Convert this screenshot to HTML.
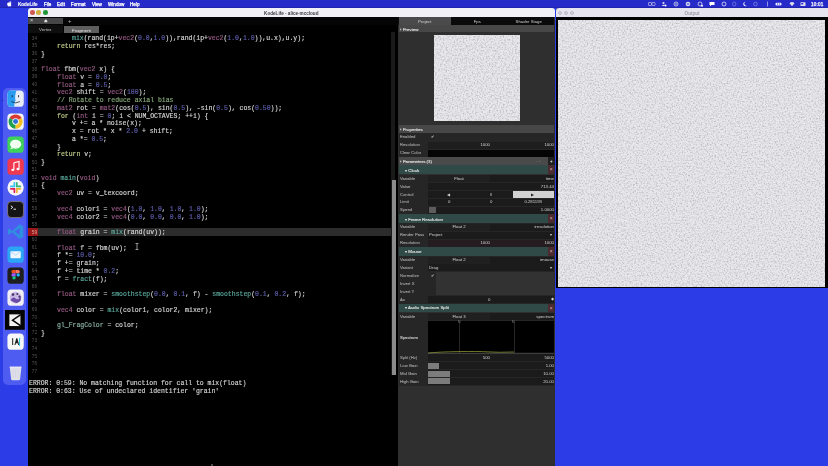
<!DOCTYPE html><html><head><meta charset="utf-8"><style>
*{margin:0;padding:0;box-sizing:border-box}
html,body{width:828px;height:466px;overflow:hidden;background:#2c3ce6;font-family:"Liberation Sans",sans-serif}
.a{will-change:transform}
.a{position:absolute}
.mb{color:#fff;-webkit-text-stroke:.25px;font-size:4.6px;line-height:8.4px;top:.7px !important;white-space:nowrap}
.code{font-family:"Liberation Mono",monospace;font-size:6.48px;-webkit-text-stroke:.16px;white-space:pre;color:#d6d6d6;line-height:7.76px;height:7.76px}
.ln{font-family:"Liberation Sans",sans-serif;font-size:4.7px;color:#6a6a6a;text-align:right;width:10px;line-height:7.76px;height:7.76px}
.t{color:#965a84}.c{color:#c4cc8c}.n{color:#5e5eac}.f{color:#5aa89c}.m{color:#86a878}.b{color:#8ab4a8}
.pl{font-size:4.2px;color:#a8a8a8;-webkit-text-stroke:.08px;white-space:nowrap}
.pv{font-size:4.3px;color:#d4d4d4;white-space:nowrap}
</style></head><body>
<div class="a" style="left:0px;top:0px;width:828px;height:7.6px;background:#262ac8;"></div>
<div class="a" style="left:0px;top:7.2px;width:828px;height:0.8px;background:#2224b0;"></div>
<svg class="a" style="left:7px;top:1.2px" width="5" height="5.5" viewBox="0 0 10 12"><path d="M8.2 6.4c0-1.5 1.2-2.2 1.3-2.3-.7-1-1.8-1.2-2.2-1.2-.9-.1-1.8.6-2.3.6-.5 0-1.2-.5-2-.5C1.9 3 .9 3.6.4 4.6c-1 1.8-.3 4.4.7 5.8.5.7 1 1.5 1.8 1.5.7 0 1-.5 1.9-.5.9 0 1.1.5 1.9.5.8 0 1.3-.7 1.7-1.4.5-.8.8-1.6.8-1.6s-1-.4-1-2.5zM6.7 2C7.1 1.5 7.4.8 7.3.1 6.7.1 6 .5 5.6 1c-.4.4-.7 1.1-.6 1.8.7 0 1.3-.4 1.7-.8z" fill="#fff"/></svg>
<div class="a mb" style="left:18px;top:0px;font-weight:bold;-webkit-text-stroke:.1px">KodeLife</div>
<div class="a mb" style="left:43.5px;top:0px;">File</div>
<div class="a mb" style="left:57px;top:0px;">Edit</div>
<div class="a mb" style="left:71px;top:0px;">Format</div>
<div class="a mb" style="left:91.5px;top:0px;">View</div>
<div class="a mb" style="left:108px;top:0px;">Window</div>
<div class="a mb" style="left:130px;top:0px;">Help</div>
<div class="a mb" style="left:810.8px;top:0px;font-size:4.6px;letter-spacing:.2px">10:01</div>
<svg class="a" style="left:648px;top:1px" width="7.5" height="6" viewBox="0 0 15.0 12"><rect x="1" y="3" width="6" height="6" rx="1" stroke="#dde" stroke-width="1.2" fill="none"/><rect x="8" y="3" width="6" height="6" rx="1" stroke="#dde" stroke-width="1.2" fill="none"/></svg>
<svg class="a" style="left:661px;top:1px" width="6" height="6" viewBox="0 0 12 12"><circle cx="5" cy="4" r="2.2" fill="#dde"/><path d="M1.5 10q3.5-5 7 0z" fill="#dde"/><circle cx="9" cy="9" r="2" fill="#fff"/></svg>
<svg class="a" style="left:672.5px;top:1px" width="6" height="6" viewBox="0 0 12 12"><circle cx="6" cy="6" r="4" stroke="#dde" stroke-width="1.6" fill="none"/><circle cx="6" cy="6" r="1.5" fill="#dde"/></svg>
<svg class="a" style="left:684.5px;top:1px" width="6" height="6" viewBox="0 0 12 12"><circle cx="6" cy="6" r="4.6" fill="#dde"/><rect x="3.5" y="5" width="5" height="2" fill="#2a2fd2"/></svg>
<svg class="a" style="left:696.5px;top:1px" width="6.5" height="6" viewBox="0 0 13.0 12"><circle cx="6" cy="6" r="4" stroke="#dde" stroke-width="1.6" fill="none"/><circle cx="10" cy="9.5" r="2" fill="#fff"/></svg>
<svg class="a" style="left:709px;top:1px" width="6" height="6" viewBox="0 0 12 12"><path d="M1 2h10v6H5l-3 2.5V8H1z" fill="#fff"/></svg>
<svg class="a" style="left:721px;top:1px" width="6" height="6" viewBox="0 0 12 12"><circle cx="6" cy="6" r="4" stroke="#fff" stroke-width="1.4" fill="none"/></svg>
<svg class="a" style="left:732px;top:1px" width="4.5" height="6" viewBox="0 0 9.0 12"><rect x="1.5" y="2.5" width="6" height="7" rx="1" stroke="#8890e8" stroke-width="1.2" fill="none"/></svg>
<svg class="a" style="left:741.5px;top:1px" width="5.5" height="6" viewBox="0 0 11.0 12"><path d="M7 1.5a4.5 4.5 0 1 0 3.5 7.5 3.8 3.8 0 0 1-3.5-7.5z" fill="#fff"/></svg>
<svg class="a" style="left:753px;top:1px" width="5" height="6" viewBox="0 0 10 12"><circle cx="5" cy="6" r="3.6" stroke="#9aa0ee" stroke-width="1.2" fill="none"/></svg>
<svg class="a" style="left:765.5px;top:1px" width="3" height="6" viewBox="0 0 6 12"><path d="M3 1v10" stroke="#c8cdf8" stroke-width="1.3"/></svg>
<svg class="a" style="left:775px;top:1px" width="7.5" height="6" viewBox="0 0 15.0 12"><rect x="1" y="3.5" width="12" height="5.5" rx="2" fill="#eef"/><rect x="4" y="3.5" width="1" height="5.5" fill="#2a2fd2"/><rect x="8" y="3.5" width="1" height="5.5" fill="#2a2fd2"/></svg>
<svg class="a" style="left:788.5px;top:1px" width="6" height="6" viewBox="0 0 12 12"><path d="M1 4.5a7 7 0 0 1 10 0L6 10.5z" fill="#dde"/></svg>
<svg class="a" style="left:799.5px;top:1px" width="6" height="6" viewBox="0 0 12 12"><rect x="1" y="2.5" width="10" height="7.5" rx="1" fill="#dde"/><rect x="2.5" y="4" width="4" height="3" fill="#2a2fd2"/></svg>
<div class="a" style="left:2.6px;top:88px;width:23.2px;height:296.5px;background:rgba(120,130,255,.45);border-radius:5px;"></div>
<svg class="a" style="left:6.8px;top:90.3px" width="17.2" height="17.2" viewBox="0 0 20 20"><rect x="0.5" y="0.5" width="19" height="19" rx="4.5" fill="#e9eef6"/><path d="M4.5 .5H11C9.5 5 9 9 10 12.5 9 13 8.5 15 8.5 19.5H4.5A4 4 0 0 1 .5 15.5V4.5A4 4 0 0 1 4.5 .5z" fill="#2a9cf0"/><rect x="5.5" y="6" width="1" height="2.5" fill="#123"/><rect x="13" y="6" width="1" height="2.5" fill="#123"/><path d="M5 13.5q5 3 10 0" stroke="#123" stroke-width=".9" fill="none"/></svg>
<svg class="a" style="left:6.8px;top:113.3px" width="17.2" height="17.2" viewBox="0 0 20 20"><rect x="0.5" y="0.5" width="19" height="19" rx="4.5" fill="#f6f6f6"/><path d="M10 10L2.90 5.90A8.2 8.2 0 0 1 17.10 5.90z" fill="#d93b30"/><path d="M10 10L10.00 18.20A8.2 8.2 0 0 1 2.90 5.90z" fill="#1e9e50"/><path d="M10 10L17.10 5.90A8.2 8.2 0 0 1 10.00 18.20z" fill="#f6c026"/><circle cx="10" cy="10" r="3.8" fill="#fff"/><circle cx="10" cy="10" r="2.9" fill="#2f72d8"/></svg>
<svg class="a" style="left:6.8px;top:135.8px" width="17.2" height="17.2" viewBox="0 0 20 20"><rect x="0.5" y="0.5" width="19" height="19" rx="4.5" fill="#3fd25a"/><ellipse cx="10" cy="9.5" rx="6.5" ry="5.2" fill="#f2fff2"/><path d="M5 13l-1.2 2.8 3.5-1.6z" fill="#f2fff2"/></svg>
<svg class="a" style="left:6.8px;top:157.6px" width="17.2" height="17.2" viewBox="0 0 20 20"><rect x="0.5" y="0.5" width="19" height="19" rx="4.5" fill="#f0384f"/><path d="M8 5.5l6-1.5v8.5" stroke="#fff" stroke-width="1.3" fill="none"/><path d="M8 5.5V13.5" stroke="#fff" stroke-width="1.3"/><ellipse cx="6.8" cy="13.8" rx="1.8" ry="1.4" fill="#fff"/><ellipse cx="12.8" cy="12.8" rx="1.8" ry="1.4" fill="#fff"/></svg>
<svg class="a" style="left:6.8px;top:179.2px" width="17.2" height="17.2" viewBox="0 0 20 20"><rect x="0.5" y="0.5" width="19" height="19" rx="9.5" fill="#f6f4f6"/><rect x="7.6" y="3.5" width="2" height="6" rx="1" fill="#36c5f0"/><rect x="3.5" y="7.6" width="6" height="2" rx="1" fill="#36c5f0"/><rect x="10.4" y="3.5" width="2" height="6" rx="1" fill="#2eb67d"/><rect x="10.4" y="7.6" width="6" height="2" rx="1" fill="#2eb67d"/><rect x="10.4" y="10.4" width="2" height="6" rx="1" fill="#ecb22e"/><rect x="10.4" y="10.4" width="6" height="2" rx="1" fill="#ecb22e"/><rect x="7.6" y="10.4" width="2" height="6" rx="1" fill="#e01e5a"/><rect x="3.5" y="10.4" width="6" height="2" rx="1" fill="#e01e5a"/></svg>
<svg class="a" style="left:6.8px;top:201.2px" width="17.2" height="17.2" viewBox="0 0 20 20"><rect x="0.7" y="0.7" width="18.6" height="18.6" rx="4.2" fill="#141414" stroke="#8a7a7a" stroke-width="1"/><path d="M4.5 5.5l2.2 1.8-2.2 1.8" stroke="#fff" stroke-width="1.1" fill="none"/><rect x="7.5" y="9" width="3" height="1" fill="#fff"/></svg>
<svg class="a" style="left:6.8px;top:223.4px" width="17.2" height="17.2" viewBox="0 0 20 20"><path d="M14.5 1.5L19 3.8V16.2L14.5 18.5 6 10.8 2.6 13.5 1 12.6V7.4L2.6 6.5 6 9.2z M14.5 6L9.2 10 14.5 14z" fill="#2f8ee0" fill-rule="evenodd"/></svg>
<svg class="a" style="left:6.8px;top:245.6px" width="17.2" height="17.2" viewBox="0 0 20 20"><rect x="0.5" y="0.5" width="19" height="19" rx="4.5" fill="#2aa6f4"/><rect x="4" y="6.2" width="12" height="8" rx="1" fill="#eef6ff"/><path d="M4.2 6.6l5.8 4 5.8-4" stroke="#9cc8ee" stroke-width=".7" fill="none"/></svg>
<svg class="a" style="left:6.8px;top:267.4px" width="17.2" height="17.2" viewBox="0 0 20 20"><rect x="0.5" y="0.5" width="19" height="19" rx="4.5" fill="#1e1e1e"/><path d="M7 3.5h3v3.8H7a1.9 1.9 0 0 1 0-3.8z" fill="#f24e1e"/><path d="M10 3.5h3a1.9 1.9 0 0 1 0 3.8h-3z" fill="#ff7262"/><path d="M7 7.3h3v3.8H7a1.9 1.9 0 0 1 0-3.8z" fill="#a259ff"/><circle cx="13" cy="9.2" r="1.9" fill="#1abcfe"/><path d="M7 11.1h3v1.9a1.9 1.9 0 1 1-3-1.9z" fill="#0acf83"/></svg>
<svg class="a" style="left:6.8px;top:289.4px" width="17.2" height="17.2" viewBox="0 0 20 20"><rect x="0.5" y="0.5" width="19" height="19" rx="4.5" fill="#f1eef4"/><circle cx="10" cy="10" r="6.8" fill="#c9b8e6"/><path d="M4 13q3-5 6-2t6-3v5q-3 4-6 3t-6-3z" fill="#6b4aa8"/><circle cx="7" cy="6.5" r="1.6" fill="#4a3a6a"/><circle cx="12" cy="5.8" r="1.2" fill="#4a3a6a"/><circle cx="14.5" cy="9" r="1.3" fill="#4a3a6a"/></svg>
<svg class="a" style="left:5.2px;top:309.6px" width="19.8" height="19.8" viewBox="0 0 20 20"><rect width="20" height="20" fill="#050505"/><rect x="4.4" y="4.4" width="11.2" height="11.8" fill="#f2f2f2"/><path d="M16 4.6 L7.6 10.3 L16 16" stroke="#050505" stroke-width="1.5" fill="none"/></svg>
<svg class="a" style="left:6.8px;top:333.4px" width="17.2" height="17.2" viewBox="0 0 20 20"><rect x="0.5" y="0.5" width="19" height="19" rx="4.5" fill="#f8f8f8"/><path d="M6 6.2h1.2V14H6z M8.6 14l2.2-7.8h1.2L14.2 14h-1.2l-.6-2.2H10.4L9.8 14z" fill="#222"/><rect x="14" y="5.5" width="1.2" height="9.5" fill="#29c6de"/></svg>
<svg class="a" style="left:6.8px;top:364.4px" width="17.2" height="17.2" viewBox="0 0 20 20"><path d="M3.2 3.5h13.6l-1.6 14.2a1.5 1.5 0 0 1-1.5 1.3H6.3a1.5 1.5 0 0 1-1.5-1.3z" fill="#dfe0ea"/><path d="M3.2 3.5h13.6" stroke="#f4f4fa" stroke-width="1"/><path d="M7 6v10 M10 6v10 M13 6v10" stroke="#c8c9d6" stroke-width=".5"/></svg>
<div class="a" style="left:2.4px;top:99.8px;width:1.4px;height:1.4px;border-radius:1px;background:#1a1a3a"></div>
<div class="a" style="left:28px;top:16.6px;width:527.2px;height:449.4px;background:#000;"></div>
<div class="a" style="left:28px;top:8.2px;width:526.6px;height:8.8px;background:#f1f0f6;border-radius:3px 3px 0 0;"></div>
<div class="a" style="left:28px;top:16.6px;width:526.6px;height:0.5px;background:#c8c8d0;"></div>
<div class="a" style="left:29.900000000000002px;top:10.3px;width:4.6px;height:4.6px;border-radius:50%;background:#cf5752"></div>
<div class="a" style="left:36.400000000000006px;top:10.3px;width:4.6px;height:4.6px;border-radius:50%;background:#cfae3e"></div>
<div class="a" style="left:42.5px;top:10.3px;width:4.6px;height:4.6px;border-radius:50%;background:#22963a"></div>
<div class="a " style="left:28px;top:9.6px;width:526.6px;text-align:center;font-size:4.6px;line-height:8.8px;color:#3a3a44;font-weight:bold">KodeLife - alice-mccloud</div>
<div class="a" style="left:28px;top:17.1px;width:370.5px;height:8px;background:#050505;"></div>
<div class="a" style="left:28px;top:18.2px;width:34.7px;height:6.3px;background:#464646;"></div>
<div class="a " style="left:30.3px;top:17.3px;font-size:5.5px;line-height:7px;color:#ddd">×</div>
<svg class="a" style="left:43.6px;top:19.2px" width="3.6" height="3.6" viewBox="0 0 6 6"><path d="M0.5 3L3 .6 5.5 3V5.5h-5z" fill="#ddd"/></svg>
<div class="a " style="left:68.3px;top:18.4px;font-size:6px;line-height:7px;color:#bbb">+</div>
<div class="a" style="left:28px;top:25.2px;width:34.7px;height:8px;background:#0e0e0e;"></div>
<div class="a " style="left:28px;top:26.2px;width:34.7px;text-align:center;font-size:4.4px;line-height:8px;color:#c4c4c4">Vertex</div>
<div class="a" style="left:63.7px;top:26px;width:34.8px;height:7.3px;background:#5e5e5e;"></div>
<div class="a " style="left:63.7px;top:26.7px;width:34.8px;text-align:center;font-size:4.4px;line-height:7.3px;color:#e6e6e6">Fragment</div>
<div class="a" style="left:28px;top:227.92000000000002px;width:363px;height:7.76px;background:#2c2c2c;"></div>
<div class="a" style="left:28px;top:227.92000000000002px;width:10px;height:7.76px;background:#9a1818;"></div>
<div class="a ln" style="left:26.8px;top:34.52px;color:#555555">34</div>
<div class="a code" style="left:72.10px;top:35.02px"><span class="f">mix</span>(rand(ip+<span class="t">vec2</span>(<span class="n">0.0</span>,<span class="n">1.0</span>)),rand(ip+<span class="t">vec2</span>(<span class="n">1.0</span>,<span class="n">1.0</span>)),u.x),u.y);</div>
<div class="a ln" style="left:26.8px;top:42.28px;color:#555555">35</div>
<div class="a code" style="left:56.55px;top:42.78px"><span class="c">return</span> res*res;</div>
<div class="a ln" style="left:26.8px;top:50.04px;color:#555555">36</div>
<div class="a code" style="left:41.00px;top:50.54px">}</div>
<div class="a ln" style="left:26.8px;top:57.80px;color:#555555">37</div>
<div class="a ln" style="left:26.8px;top:65.56px;color:#555555">38</div>
<div class="a code" style="left:41.00px;top:66.06px"><span class="t">float</span> fbm(<span class="t">vec2</span> x) {</div>
<div class="a ln" style="left:26.8px;top:73.32px;color:#555555">39</div>
<div class="a code" style="left:56.55px;top:73.82px"><span class="t">float</span> v = <span class="n">0.0</span>;</div>
<div class="a ln" style="left:26.8px;top:81.08px;color:#555555">40</div>
<div class="a code" style="left:56.55px;top:81.58px"><span class="t">float</span> a = <span class="n">0.5</span>;</div>
<div class="a ln" style="left:26.8px;top:88.84px;color:#555555">41</div>
<div class="a code" style="left:56.55px;top:89.34px"><span class="t">vec2</span> shift = <span class="t">vec2</span>(<span class="n">100</span>);</div>
<div class="a ln" style="left:26.8px;top:96.60px;color:#555555">42</div>
<div class="a code" style="left:56.55px;top:97.10px"><span class="m">// Rotate to reduce axial bias</span></div>
<div class="a ln" style="left:26.8px;top:104.36px;color:#555555">43</div>
<div class="a code" style="left:56.55px;top:104.86px"><span class="t">mat2</span> rot = <span class="t">mat2</span>(cos(<span class="n">0.5</span>), sin(<span class="n">0.5</span>), -sin(<span class="n">0.5</span>), cos(<span class="n">0.50</span>));</div>
<div class="a ln" style="left:26.8px;top:112.12px;color:#555555">44</div>
<div class="a code" style="left:56.55px;top:112.62px"><span class="c">for</span> (<span class="t">int</span> i = <span class="n">0</span>; i &lt; NUM_OCTAVES; ++i) {</div>
<div class="a ln" style="left:26.8px;top:119.88px;color:#555555">45</div>
<div class="a code" style="left:72.10px;top:120.38px">v += a * noise(x);</div>
<div class="a ln" style="left:26.8px;top:127.64px;color:#555555">46</div>
<div class="a code" style="left:72.10px;top:128.14px">x = rot * x * <span class="n">2.0</span> + shift;</div>
<div class="a ln" style="left:26.8px;top:135.40px;color:#555555">47</div>
<div class="a code" style="left:72.10px;top:135.90px">a *= <span class="n">0.5</span>;</div>
<div class="a ln" style="left:26.8px;top:143.16px;color:#555555">48</div>
<div class="a code" style="left:56.55px;top:143.66px">}</div>
<div class="a ln" style="left:26.8px;top:150.92px;color:#555555">49</div>
<div class="a code" style="left:56.55px;top:151.42px"><span class="c">return</span> v;</div>
<div class="a ln" style="left:26.8px;top:158.68px;color:#555555">50</div>
<div class="a code" style="left:41.00px;top:159.18px">}</div>
<div class="a ln" style="left:26.8px;top:166.44px;color:#555555">51</div>
<div class="a ln" style="left:26.8px;top:174.20px;color:#555555">52</div>
<div class="a code" style="left:41.00px;top:174.70px"><span class="t">void</span> <span class="f">main</span>(<span class="t">void</span>)</div>
<div class="a ln" style="left:26.8px;top:181.96px;color:#555555">53</div>
<div class="a code" style="left:41.00px;top:182.46px">{</div>
<div class="a ln" style="left:26.8px;top:189.72px;color:#555555">54</div>
<div class="a code" style="left:56.55px;top:190.22px"><span class="t">vec2</span> uv = v_texcoord;</div>
<div class="a ln" style="left:26.8px;top:197.48px;color:#555555">55</div>
<div class="a ln" style="left:26.8px;top:205.24px;color:#555555">56</div>
<div class="a code" style="left:56.55px;top:205.74px"><span class="t">vec4</span> color1 = <span class="t">vec4</span>(<span class="n">1.0</span>, <span class="n">1.0</span>, <span class="n">1.0</span>, <span class="n">1.0</span>);</div>
<div class="a ln" style="left:26.8px;top:213.00px;color:#555555">57</div>
<div class="a code" style="left:56.55px;top:213.50px"><span class="t">vec4</span> color2 = <span class="t">vec4</span>(<span class="n">0.0</span>, <span class="n">0.0</span>, <span class="n">0.0</span>, <span class="n">1.0</span>);</div>
<div class="a ln" style="left:26.8px;top:220.76px;color:#555555">58</div>
<div class="a ln" style="left:26.8px;top:228.52px;color:#e0a0a0">59</div>
<div class="a code" style="left:56.55px;top:229.02px"><span class="t">float</span> grain = <span class="f">mix</span>(rand(uv));</div>
<div class="a ln" style="left:26.8px;top:236.28px;color:#555555">60</div>
<div class="a ln" style="left:26.8px;top:244.04px;color:#555555">61</div>
<div class="a code" style="left:56.55px;top:244.54px"><span class="t">float</span> f = fbm(uv);</div>
<div class="a ln" style="left:26.8px;top:251.80px;color:#555555">62</div>
<div class="a code" style="left:56.55px;top:252.30px">f *= <span class="n">10.0</span>;</div>
<div class="a ln" style="left:26.8px;top:259.56px;color:#555555">63</div>
<div class="a code" style="left:56.55px;top:260.06px">f += grain;</div>
<div class="a ln" style="left:26.8px;top:267.32px;color:#555555">64</div>
<div class="a code" style="left:56.55px;top:267.82px">f += time * <span class="n">0.2</span>;</div>
<div class="a ln" style="left:26.8px;top:275.08px;color:#555555">65</div>
<div class="a code" style="left:56.55px;top:275.58px">f = <span class="f">fract</span>(f);</div>
<div class="a ln" style="left:26.8px;top:282.84px;color:#555555">66</div>
<div class="a ln" style="left:26.8px;top:290.60px;color:#555555">67</div>
<div class="a code" style="left:56.55px;top:291.10px"><span class="t">float</span> mixer = <span class="f">smoothstep</span>(<span class="n">0.0</span>, <span class="n">0.1</span>, f) - <span class="f">smoothstep</span>(<span class="n">0.1</span>, <span class="n">0.2</span>, f);</div>
<div class="a ln" style="left:26.8px;top:298.36px;color:#555555">68</div>
<div class="a ln" style="left:26.8px;top:306.12px;color:#555555">69</div>
<div class="a code" style="left:56.55px;top:306.62px"><span class="t">vec4</span> color = <span class="f">mix</span>(color1, color2, mixer);</div>
<div class="a ln" style="left:26.8px;top:313.88px;color:#555555">70</div>
<div class="a ln" style="left:26.8px;top:321.64px;color:#555555">71</div>
<div class="a code" style="left:56.55px;top:322.14px"><span class="b">gl_FragColor</span> = color;</div>
<div class="a ln" style="left:26.8px;top:329.40px;color:#555555">72</div>
<div class="a code" style="left:41.00px;top:329.90px">}</div>
<div class="a ln" style="left:26.8px;top:337.16px;color:#555555">73</div>
<div class="a ln" style="left:26.8px;top:344.92px;color:#555555">74</div>
<div class="a ln" style="left:26.8px;top:352.68px;color:#555555">75</div>
<div class="a ln" style="left:26.8px;top:360.44px;color:#555555">76</div>
<div class="a ln" style="left:26.8px;top:368.20px;color:#555555">77</div>
<svg class="a" style="left:134.5px;top:243px" width="4" height="7" viewBox="0 0 4 7"><path d="M0.5 .5h3M2 .5v6M.5 6.5h3" stroke="#ccc" stroke-width=".7" fill="none"/></svg>
<div class="a code" style="left:29.2px;top:380.10px;color:#d2d2d2">ERROR: 0:59: No matching function for call to mix(float)</div>
<div class="a code" style="left:29.2px;top:388.00px;color:#d2d2d2">ERROR: 0:63: Use of undeclared identifier &#x27;grain&#x27;</div>
<div class="a" style="left:210.8px;top:463.6px;width:1.6px;height:2px;background:#666;border-radius:1px"></div>
<div class="a" style="left:391.4px;top:32px;width:4.3px;height:343px;background:#1a1a1a;"></div>
<div class="a" style="left:391.8px;top:180.2px;width:3.6px;height:194.8px;background:#8c8c8c;"></div>
<div class="a" style="left:398.2px;top:17.1px;width:157.00000000000006px;height:448.9px;background:#2f2f2f;"></div>
<div class="a" style="left:398.2px;top:17.1px;width:156.40000000000003px;height:8px;background:#0a0a0a;"></div>
<div class="a" style="left:399.0px;top:17.1px;width:51.5px;height:8px;background:#4b4b4b;"></div>
<div class="a pv" style="left:399.0px;top:17.6px;width:51.5px;text-align:center;line-height:8px">Project</div>
<div class="a pv" style="left:450.5px;top:17.6px;width:52.5px;text-align:center;line-height:8px;color:#cfcfcf">Fps</div>
<div class="a pv" style="left:503px;top:17.6px;width:51.5px;text-align:center;line-height:8px;color:#cfcfcf">Shader Stage</div>
<div class="a" style="left:398.8px;top:25.1px;width:155.20000000000005px;height:7.3999999999999995px;background:#474747;"></div>
<div class="a pv" style="left:400.3px;top:25.6px;line-height:7.8px;font-size:4.4px;color:#e2e2e2;-webkit-text-stroke:.12px">› Preview</div>
<svg class="a" style="left:434px;top:34.6px" width="86" height="86"><filter id="nz"><feTurbulence type="fractalNoise" baseFrequency="0.65" numOctaves="2" seed="3"/><feColorMatrix values="0 0 0 0 0.5  0 0 0 0 0.5  0 0 0 0 0.54  2.5 0 0 0 -1.08"/></filter><rect width="86" height="86" fill="#e8e8ec"/><rect width="86" height="86" filter="url(#nz)"/></svg>
<div class="a" style="left:398.8px;top:125px;width:155.20000000000005px;height:7.6px;background:#474747;"></div>
<div class="a pv" style="left:400.3px;top:125.5px;line-height:8px;font-size:4.4px;color:#e2e2e2;-webkit-text-stroke:.12px">› Properties</div>
<div class="a" style="left:398.8px;top:133px;width:155.20000000000005px;height:7.9px;background:#262626;"></div>
<div class="a pl" style="left:400.3px;top:133px;line-height:7.9px">Enabled</div>
<div class="a pv" style="left:430.8px;top:133px;line-height:7.9px;font-size:4px">✔</div>
<div class="a" style="left:398.8px;top:141px;width:155.20000000000005px;height:7.9px;background:#262626;"></div>
<div class="a pl" style="left:400.3px;top:141px;line-height:7.9px">Resolution</div>
<div class="a" style="left:428px;top:141.6px;width:126px;height:6.8px;background:#1e1e1e;"></div>
<div class="a pv" style="left:470px;top:141px;width:20px;text-align:right;line-height:7.9px">1000</div>
<div class="a pv" style="left:534px;top:141px;width:20px;text-align:right;line-height:7.9px">1000</div>
<div class="a" style="left:398.8px;top:149px;width:155.20000000000005px;height:7.9px;background:#262626;"></div>
<div class="a pl" style="left:400.3px;top:149px;line-height:7.9px">Clear Color</div>
<div class="a" style="left:428px;top:149.6px;width:126px;height:6.8px;background:#050505;"></div>
<div class="a" style="left:398.8px;top:157px;width:155.20000000000005px;height:7.6px;background:#4a4a4a;"></div>
<div class="a pv" style="left:400.3px;top:157.5px;line-height:8px;font-size:4.4px;color:#e2e2e2;-webkit-text-stroke:.12px">› Parameters (3)</div>
<div class="a" style="left:548px;top:157.4px;width:6.6px;height:7.6px;background:#202020;"></div>
<div class="a " style="left:548px;top:157px;width:6.6px;text-align:center;line-height:8px;font-size:5px;color:#eee">+</div>
<div class="a " style="left:536px;top:157px;line-height:8px;font-size:4px;color:#777">- +</div>
<div class="a" style="left:398.8px;top:165px;width:155.20000000000005px;height:9.299999999999999px;background:#2f4a47;"></div>
<div class="a pv" style="left:405.3px;top:165.5px;line-height:9.7px;font-size:4.4px;color:#e2e2e2;-webkit-text-stroke:.12px">▾ Clock</div>
<div class="a" style="left:548px;top:165px;width:6.4px;height:9.299999999999999px;background:#4a2c30;"></div>
<div class="a " style="left:548px;top:165px;width:6.4px;text-align:center;line-height:9.7px;font-size:5px;color:#e8b0b0">×</div>
<div class="a" style="left:398.8px;top:174.7px;width:155.20000000000005px;height:7.9px;background:#262626;"></div>
<div class="a pl" style="left:400.3px;top:174.7px;line-height:7.9px">Variable</div>
<div class="a" style="left:428px;top:175.2px;width:126px;height:6.9px;background:#1b1b1b;"></div>
<div class="a" style="left:428px;top:175.2px;width:62px;height:6.9px;background:#202020;"></div>
<div class="a pv" style="left:428px;top:174.7px;width:62px;text-align:center;line-height:7.9px">Float</div>
<div class="a pv" style="left:520px;top:174.7px;width:34px;text-align:right;line-height:7.9px">time</div>
<div class="a" style="left:398.8px;top:182.6px;width:155.20000000000005px;height:7.9px;background:#262626;"></div>
<div class="a pl" style="left:400.3px;top:182.6px;line-height:7.9px">Value</div>
<div class="a" style="left:428px;top:183.1px;width:126px;height:6.9px;background:#1b1b1b;"></div>
<div class="a pv" style="left:520px;top:182.6px;width:34px;text-align:right;line-height:7.9px">713.44</div>
<div class="a" style="left:398.8px;top:190.5px;width:155.20000000000005px;height:7.9px;background:#262626;"></div>
<div class="a pl" style="left:400.3px;top:190.5px;line-height:7.9px">Control</div>
<div class="a" style="left:428px;top:191.0px;width:126px;height:6.9px;background:#1b1b1b;"></div>
<div class="a pv" style="left:447px;top:190.5px;line-height:7.9px;font-size:4px">◀</div>
<div class="a pv" style="left:489.8px;top:190.5px;line-height:7.9px;font-size:4.4px">‖</div>
<div class="a" style="left:513.4px;top:191.2px;width:41.2px;height:6.6px;background:#d2d2d2;"></div>
<div class="a " style="left:531px;top:190.5px;line-height:7.9px;font-size:4px;color:#222">▶</div>
<div class="a" style="left:398.8px;top:198.4px;width:155.20000000000005px;height:7.9px;background:#262626;"></div>
<div class="a pl" style="left:400.3px;top:198.4px;line-height:7.9px">Limit</div>
<div class="a" style="left:428px;top:198.9px;width:126px;height:6.9px;background:#1b1b1b;"></div>
<div class="a pv" style="left:447.8px;top:198.4px;line-height:7.9px">0</div>
<div class="a pv" style="left:490px;top:198.4px;line-height:7.9px">0</div>
<div class="a pv" style="left:520px;top:198.4px;width:22px;text-align:right;line-height:7.9px">0.281193</div>
<div class="a" style="left:398.8px;top:206.3px;width:155.20000000000005px;height:7.9px;background:#262626;"></div>
<div class="a pl" style="left:400.3px;top:206.3px;line-height:7.9px">Speed</div>
<div class="a" style="left:428px;top:206.8px;width:126px;height:6.9px;background:#1b1b1b;"></div>
<div class="a" style="left:428.9px;top:207.3px;width:7px;height:6.4px;background:#5c5c5c;"></div>
<div class="a pv" style="left:520px;top:206.3px;width:34px;text-align:right;line-height:7.9px">1.0000</div>
<div class="a" style="left:398.8px;top:214.2px;width:155.20000000000005px;height:8.799999999999999px;background:#2f4a47;"></div>
<div class="a pv" style="left:405.3px;top:214.7px;line-height:9.2px;font-size:4.4px;color:#e2e2e2;-webkit-text-stroke:.12px">▾ Frame Resolution</div>
<div class="a" style="left:548px;top:214.2px;width:6.4px;height:8.799999999999999px;background:#4a2c30;"></div>
<div class="a " style="left:548px;top:214.2px;width:6.4px;text-align:center;line-height:9.2px;font-size:5px;color:#e8b0b0">×</div>
<div class="a" style="left:398.8px;top:223.4px;width:155.20000000000005px;height:7.9px;background:#262626;"></div>
<div class="a pl" style="left:400.3px;top:223.4px;line-height:7.9px">Variable</div>
<div class="a" style="left:428px;top:223.9px;width:126px;height:6.9px;background:#1b1b1b;"></div>
<div class="a" style="left:428px;top:223.9px;width:62px;height:6.9px;background:#202020;"></div>
<div class="a pv" style="left:428px;top:223.4px;width:62px;text-align:center;line-height:7.9px">Float 2</div>
<div class="a pv" style="left:514px;top:223.4px;width:40px;text-align:right;line-height:7.9px">iresolution</div>
<div class="a" style="left:398.8px;top:231.3px;width:155.20000000000005px;height:7.9px;background:#262626;"></div>
<div class="a pl" style="left:400.3px;top:231.3px;line-height:7.9px">Render Pass</div>
<div class="a" style="left:428px;top:231.8px;width:126px;height:6.9px;background:#1b1b1b;"></div>
<div class="a pv" style="left:429px;top:231.3px;line-height:7.9px">Project</div>
<div class="a pv" style="left:550px;top:231.3px;line-height:7.9px;font-size:4px">▾</div>
<div class="a" style="left:398.8px;top:239.2px;width:155.20000000000005px;height:7.9px;background:#262626;"></div>
<div class="a pl" style="left:400.3px;top:239.2px;line-height:7.9px">Resolution</div>
<div class="a" style="left:428px;top:239.7px;width:126px;height:6.9px;background:#1b1b1b;"></div>
<div class="a" style="left:428px;top:239.7px;width:126px;height:6.9px;background:#241c1f;"></div>
<div class="a pv" style="left:470px;top:239.2px;width:20px;text-align:right;line-height:7.9px">1000</div>
<div class="a pv" style="left:534px;top:239.2px;width:20px;text-align:right;line-height:7.9px">1000</div>
<div class="a" style="left:398.8px;top:247.1px;width:155.20000000000005px;height:8.5px;background:#2f4a47;"></div>
<div class="a pv" style="left:405.3px;top:247.6px;line-height:8.9px;font-size:4.4px;color:#e2e2e2;-webkit-text-stroke:.12px">▾ Mouse</div>
<div class="a" style="left:548px;top:247.1px;width:6.4px;height:8.5px;background:#4a2c30;"></div>
<div class="a " style="left:548px;top:247.1px;width:6.4px;text-align:center;line-height:8.9px;font-size:5px;color:#e8b0b0">×</div>
<div class="a" style="left:398.8px;top:256px;width:155.20000000000005px;height:7.9px;background:#262626;"></div>
<div class="a pl" style="left:400.3px;top:256px;line-height:7.9px">Variable</div>
<div class="a" style="left:428px;top:256.5px;width:126px;height:6.9px;background:#1b1b1b;"></div>
<div class="a" style="left:428px;top:256.5px;width:62px;height:6.9px;background:#202020;"></div>
<div class="a pv" style="left:428px;top:256px;width:62px;text-align:center;line-height:7.9px">Float 2</div>
<div class="a pv" style="left:520px;top:256px;width:34px;text-align:right;line-height:7.9px">imouse</div>
<div class="a" style="left:398.8px;top:263.9px;width:155.20000000000005px;height:7.9px;background:#262626;"></div>
<div class="a pl" style="left:400.3px;top:263.9px;line-height:7.9px">Variant</div>
<div class="a" style="left:428px;top:264.4px;width:126px;height:6.9px;background:#1b1b1b;"></div>
<div class="a pv" style="left:429px;top:263.9px;line-height:7.9px">Drag</div>
<div class="a pv" style="left:550px;top:263.9px;line-height:7.9px;font-size:4px">▾</div>
<div class="a" style="left:398.8px;top:271.8px;width:155.20000000000005px;height:7.9px;background:#262626;"></div>
<div class="a pl" style="left:400.3px;top:271.8px;line-height:7.9px">Normalize</div>
<div class="a pv" style="left:430.8px;top:271.8px;line-height:7.9px;font-size:4px">✔</div>
<div class="a" style="left:398.8px;top:279.7px;width:155.20000000000005px;height:7.9px;background:#262626;"></div>
<div class="a pl" style="left:400.3px;top:279.7px;line-height:7.9px">Invert X</div>
<div class="a" style="left:398.8px;top:287.6px;width:155.20000000000005px;height:7.9px;background:#262626;"></div>
<div class="a pl" style="left:400.3px;top:287.6px;line-height:7.9px">Invert Y</div>
<div class="a" style="left:436px;top:272.3px;width:118px;height:23.3px;background:#323232;"></div>
<div class="a" style="left:398.8px;top:295.5px;width:155.20000000000005px;height:7.9px;background:#262626;"></div>
<div class="a pl" style="left:400.3px;top:295.5px;line-height:7.9px">Ax</div>
<div class="a" style="left:428px;top:296.0px;width:126px;height:6.9px;background:#1b1b1b;"></div>
<div class="a pv" style="left:487.5px;top:295.5px;line-height:7.9px">0</div>
<div class="a pv" style="left:550.5px;top:295.5px;line-height:7.9px;font-size:3.5px">◆</div>
<div class="a" style="left:398.8px;top:303.9px;width:155.20000000000005px;height:8.4px;background:#2f4a47;"></div>
<div class="a pv" style="left:405.3px;top:304.4px;line-height:8.8px;font-size:4.4px;color:#e2e2e2;-webkit-text-stroke:.12px">▾ Audio Spectrum Split</div>
<div class="a" style="left:548px;top:303.9px;width:6.4px;height:8.4px;background:#4a2c30;"></div>
<div class="a " style="left:548px;top:303.9px;width:6.4px;text-align:center;line-height:8.8px;font-size:5px;color:#e8b0b0">×</div>
<div class="a" style="left:398.8px;top:312.6px;width:155.20000000000005px;height:7.9px;background:#262626;"></div>
<div class="a pl" style="left:400.3px;top:312.6px;line-height:7.9px">Variable</div>
<div class="a" style="left:428px;top:313.1px;width:126px;height:6.9px;background:#1b1b1b;"></div>
<div class="a" style="left:428px;top:313.1px;width:62px;height:6.9px;background:#202020;"></div>
<div class="a pv" style="left:428px;top:312.6px;width:62px;text-align:center;line-height:7.9px">Float 3</div>
<div class="a pv" style="left:514px;top:312.6px;width:40px;text-align:right;line-height:7.9px">spectrum</div>
<div class="a" style="left:398.8px;top:320.5px;width:155.20000000000005px;height:33.3px;background:#262626;"></div>
<div class="a pl" style="left:400.3px;top:320.5px;line-height:33.3px">Spectrum</div>
<div class="a pl" style="left:400.3px;top:320.5px;line-height:33px">Spectrum</div>
<div class="a" style="left:428.2px;top:320.6px;width:126px;height:33px;background:#000;"></div>
<div class="a" style="left:459.4px;top:322px;width:0.6px;height:31px;background:#262626;"></div>
<div class="a" style="left:513.6px;top:322px;width:0.6px;height:31px;background:#262626;"></div>
<div class="a " style="left:458px;top:320.2px;font-size:3px;color:#888">M</div>
<div class="a " style="left:512.2px;top:320.2px;font-size:3px;color:#888">M</div>
<svg class="a" style="left:428px;top:348px" width="126" height="6"><path d="M0 5 Q10 4 30 3.6 T60 3.9 86 4" stroke="#8e9636" stroke-width=".8" fill="none"/><path d="M0 5.3H126" stroke="#9a9a9a" stroke-width=".5"/></svg>
<div class="a" style="left:398.8px;top:353.8px;width:155.20000000000005px;height:7.9px;background:#262626;"></div>
<div class="a pl" style="left:400.3px;top:353.8px;line-height:7.9px">Split (Hz)</div>
<div class="a" style="left:428px;top:354.3px;width:126px;height:6.9px;background:#1b1b1b;"></div>
<div class="a pv" style="left:470px;top:353.8px;width:20px;text-align:right;line-height:7.9px">500</div>
<div class="a pv" style="left:534px;top:353.8px;width:20px;text-align:right;line-height:7.9px">5000</div>
<div class="a" style="left:398.8px;top:361.7px;width:155.20000000000005px;height:7.9px;background:#262626;"></div>
<div class="a pl" style="left:400.3px;top:361.7px;line-height:7.9px">Low Gain</div>
<div class="a" style="left:428px;top:362.2px;width:126px;height:6.9px;background:#1b1b1b;"></div>
<div class="a" style="left:428.2px;top:362.6px;width:10.5px;height:6px;background:#7c7c7c;"></div>
<div class="a pv" style="left:520px;top:361.7px;width:34px;text-align:right;line-height:7.9px">1.00</div>
<div class="a" style="left:398.8px;top:369.6px;width:155.20000000000005px;height:7.9px;background:#262626;"></div>
<div class="a pl" style="left:400.3px;top:369.6px;line-height:7.9px">Mid Gain</div>
<div class="a" style="left:428px;top:370.1px;width:126px;height:6.9px;background:#1b1b1b;"></div>
<div class="a" style="left:428.2px;top:370.5px;width:21.8px;height:6px;background:#7c7c7c;"></div>
<div class="a pv" style="left:520px;top:369.6px;width:34px;text-align:right;line-height:7.9px">10.00</div>
<div class="a" style="left:398.8px;top:377.5px;width:155.20000000000005px;height:7.9px;background:#262626;"></div>
<div class="a pl" style="left:400.3px;top:377.5px;line-height:7.9px">High Gain</div>
<div class="a" style="left:428px;top:378.0px;width:126px;height:6.9px;background:#1b1b1b;"></div>
<div class="a" style="left:428.2px;top:378.4px;width:21.8px;height:6px;background:#7c7c7c;"></div>
<div class="a pv" style="left:520px;top:377.5px;width:34px;text-align:right;line-height:7.9px">20.00</div>
<div class="a" style="left:555.8px;top:8.3px;width:272.20000000000005px;height:280.3px;background:#000;border-radius:3px 0 0 0"></div>
<div class="a" style="left:555.8px;top:8.3px;width:272.20000000000005px;height:8.8px;background:#e6e4ee;border-radius:3px 0 0 0"></div>
<div class="a" style="left:557.6px;top:10.9px;width:4.2px;height:4.2px;border-radius:50%;background:#d2d0da;border:.5px solid #bdbbc6"></div>
<div class="a" style="left:563.6999999999999px;top:10.9px;width:4.2px;height:4.2px;border-radius:50%;background:#d2d0da;border:.5px solid #bdbbc6"></div>
<div class="a" style="left:570.1px;top:10.9px;width:4.2px;height:4.2px;border-radius:50%;background:#d2d0da;border:.5px solid #bdbbc6"></div>
<div class="a " style="left:555.8px;top:9.8px;width:272.20000000000005px;text-align:center;font-size:4.6px;line-height:8.8px;color:#a09eaa;font-weight:bold">Output</div>
<svg class="a" style="left:557.8px;top:19.8px" width="267.4" height="267.4"><filter id="nz2"><feTurbulence type="fractalNoise" baseFrequency="0.65" numOctaves="2" seed="7"/><feColorMatrix values="0 0 0 0 0.5  0 0 0 0 0.5  0 0 0 0 0.54  2.5 0 0 0 -1.08"/></filter><rect width="100%" height="100%" fill="#e8e8ec"/><rect width="100%" height="100%" filter="url(#nz2)"/></svg>
</body></html>
